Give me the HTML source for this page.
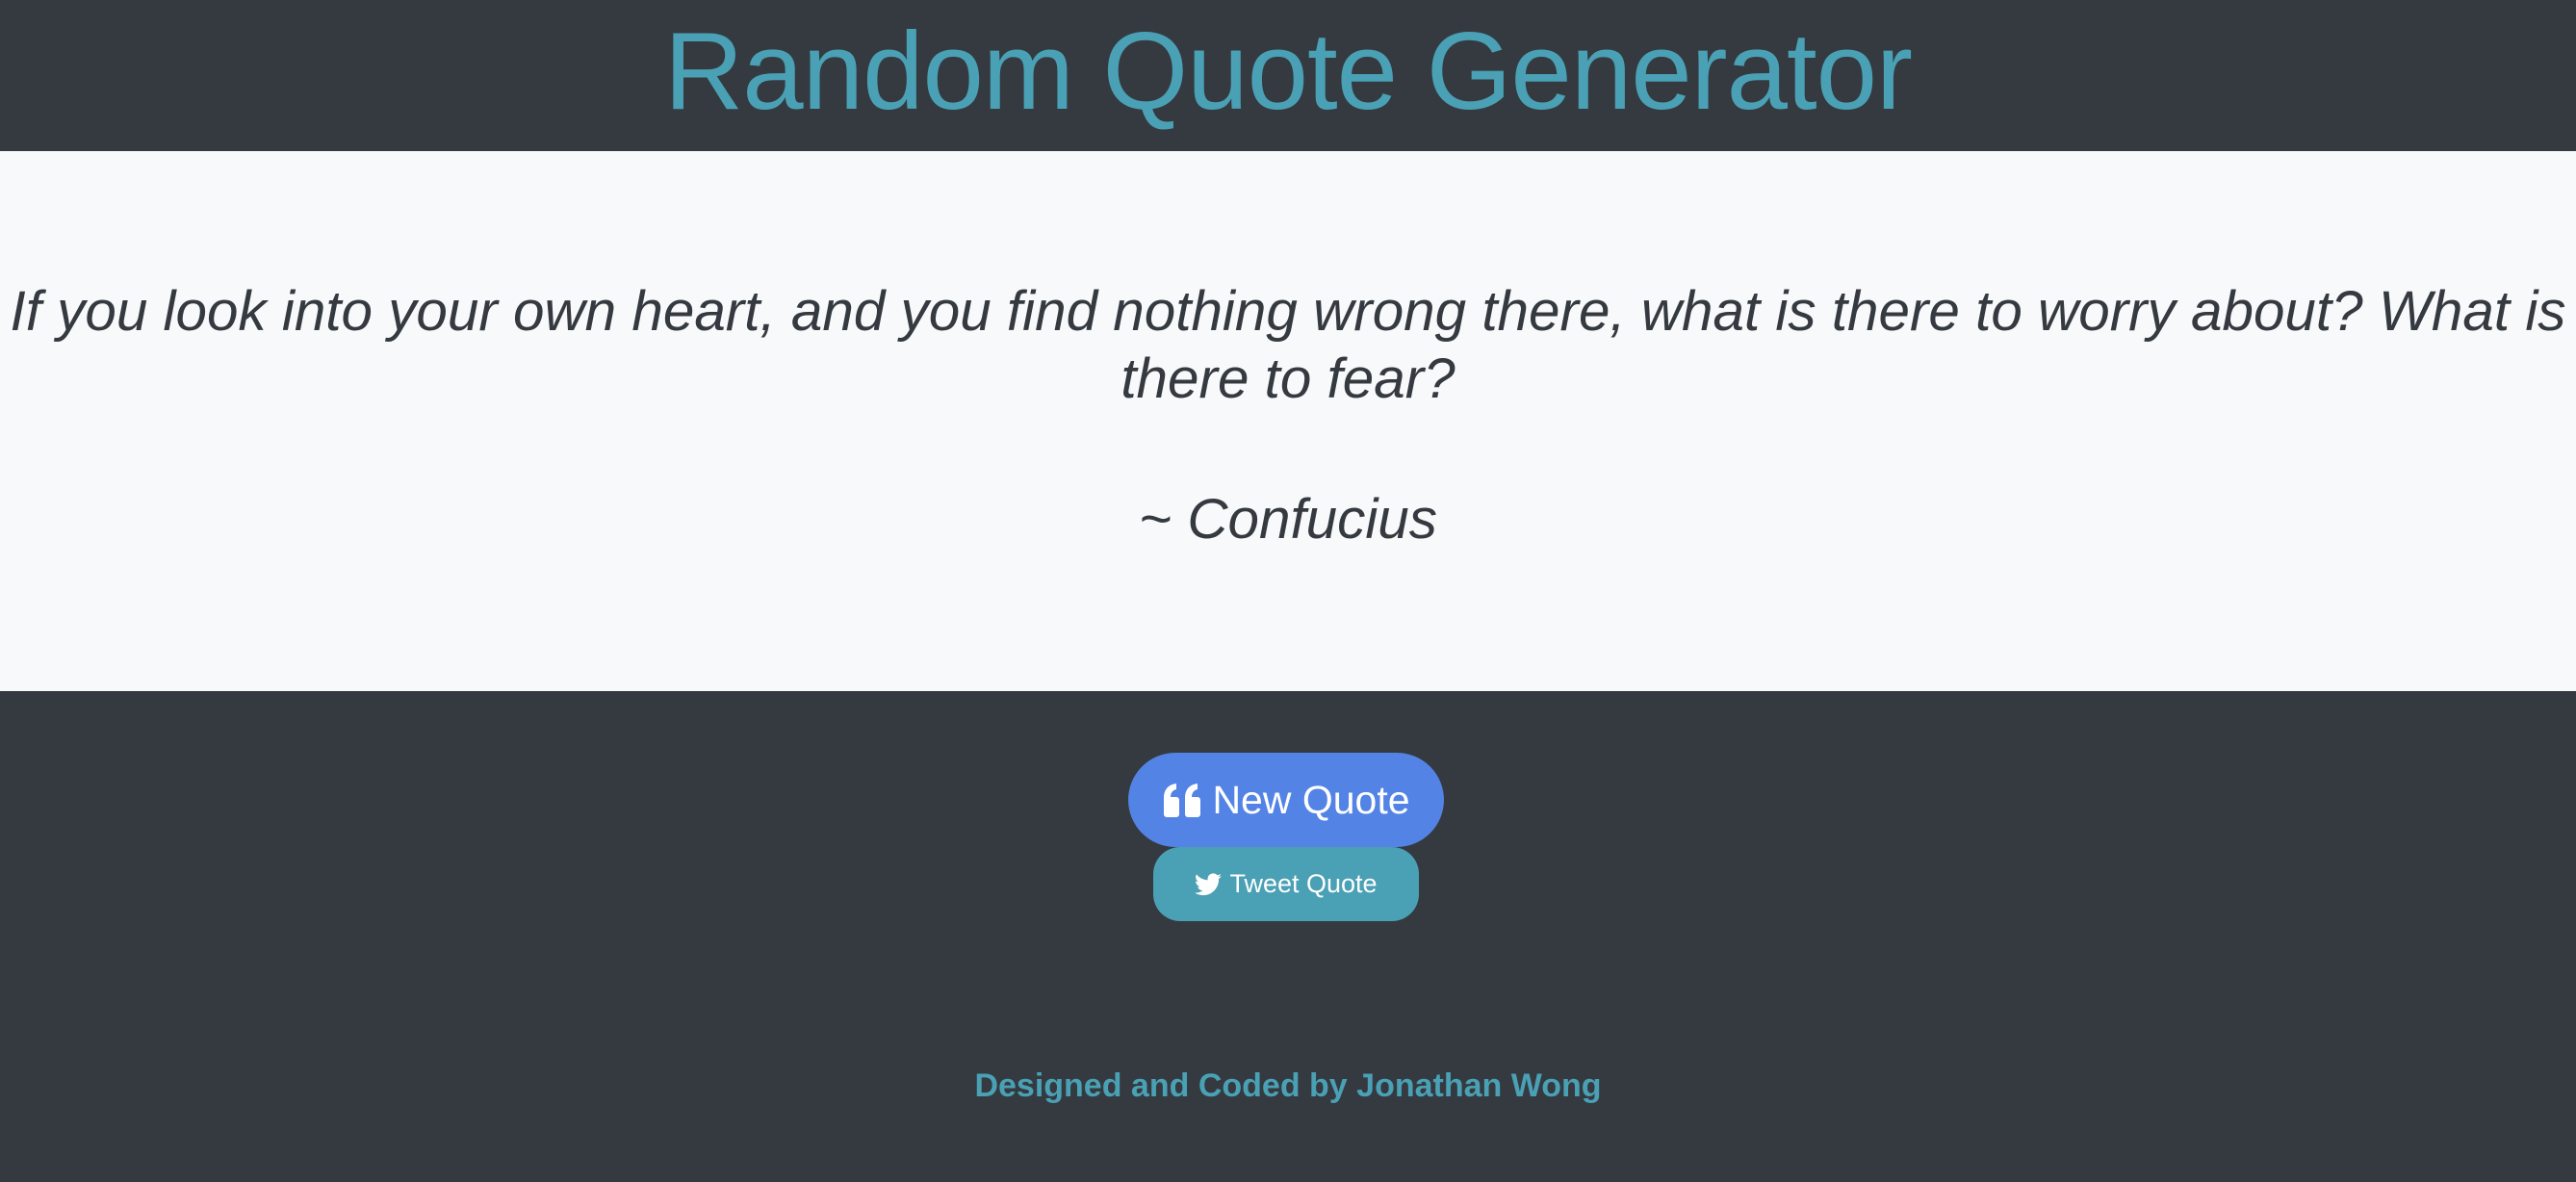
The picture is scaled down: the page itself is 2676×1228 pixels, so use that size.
<!DOCTYPE html>
<html><head><meta charset="utf-8"><style>
html,body{margin:0;padding:0;width:2676px;height:1228px;overflow:hidden;background:#343a40;font-family:"Liberation Sans",sans-serif}
.t{position:absolute;left:0;width:2676px;text-align:center;white-space:nowrap}
#title{top:0;height:157px;line-height:150px;font-size:114px;color:#4aa0b4;letter-spacing:-1px}
#mid{position:absolute;top:157px;left:0;width:2676px;height:561px;background:#f8f9fa}
.q{font-style:italic;color:#343a40;font-size:58.4px;letter-spacing:0}
.btn{position:absolute;color:#fff;display:flex;align-items:center;justify-content:center;white-space:nowrap}
#nq{left:1172px;top:782px;width:328px;height:98px;border-radius:49px;background:#5383e5;font-size:41px}
#tw{left:1198px;top:880px;width:276px;height:77px;border-radius:28px;background:#4aa0b4;font-size:27px}
#ft{top:1109px;font-size:34px;font-weight:bold;color:#4aa0b4}
</style></head><body>
<div class="t" id="title">Random Quote Generator</div>
<div id="mid"></div>
<div class="t q" style="top:289px;line-height:70px">If you look into your own heart, and you find nothing wrong there, what is there to worry about? What is<br>there to fear?</div>
<div class="t q" style="top:505px;line-height:70px">~ Confucius</div>
<div class="btn" id="nq"><svg width="44" height="36" viewBox="0 0 44 36" style="margin-right:8px"><path fill="#fff" d="M2 16C2 7 7 2 15 1v6c-4 1-6 4-6 8h6a3 3 0 0 1 3 3v15a3 3 0 0 1-3 3H5a3 3 0 0 1-3-3zM24 16c0-9 5-14 13-15v6c-4 1-6 4-6 8h6a3 3 0 0 1 3 3v15a3 3 0 0 1-3 3H27a3 3 0 0 1-3-3z"/></svg>New Quote</div>
<div class="btn" id="tw"><svg width="28" height="24" viewBox="0 0 24 20" style="margin-right:8px"><path fill="#fff" d="M24 2.4c-.9.4-1.8.7-2.8.8 1-.6 1.8-1.6 2.2-2.7-1 .6-2 1-3.1 1.200C19.3.7 18 0 16.5 0c-2.7 0-4.9 2.2-4.9 4.9 0 .4 0 .8.1 1.1C7.6 5.8 4.1 3.9 1.7.9c-.4.7-.7 1.6-.7 2.5 0 1.7.9 3.2 2.2 4.1-.8 0-1.600-.2-2.200-.6v.1c0 2.4 1.7 4.4 3.9 4.8-.4.1-.8.2-1.3.2-.3 0-.6 0-.9-.1.6 2 2.4 3.4 4.6 3.4-1.7 1.3-3.8 2.1-6.1 2.1-.4 0-.8 0-1.2-.1 2.2 1.4 4.8 2.2 7.5 2.2 9.1 0 14-7.5 14-14v-.6c1-.7 1.8-1.6 2.5-2.5z"/></svg>Tweet Quote</div>
<div class="t" id="ft">Designed and Coded by Jonathan Wong</div>
</body></html>
